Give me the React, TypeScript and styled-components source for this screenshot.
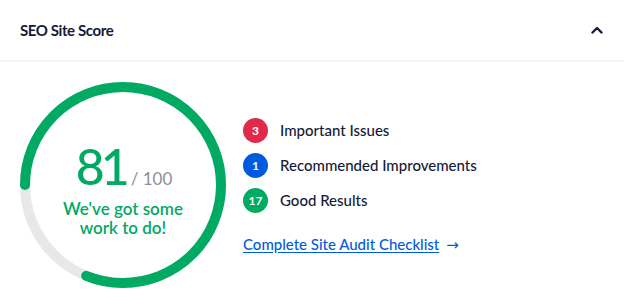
import React from 'react';
import styled, { createGlobalStyle } from 'styled-components';

const GlobalStyle = createGlobalStyle`
  html, body {
    margin: 0;
    padding: 0;
    background: #ffffff;
  }
  body {
    font-family: Lato, "Noto Sans", sans-serif;
    color: #141b38;
  }
`;

const RADIUS = 98;
const STROKE = 10;
const SIZE = (RADIUS + STROKE / 2) * 2;
const CIRC = 2 * Math.PI * RADIUS;

const stats = [
  { count: 3, label: 'Important Issues', color: '#df2a4a' },
  { count: 1, label: 'Recommended Improvements', color: '#005ae0' },
  { count: 17, label: 'Good Results', color: '#00aa63' },
];

function ScoreRing({ score }: { score: number }) {
  const filled = (score / 100) * CIRC;
  return (
    <RingWrap>
      <RingSvg width={SIZE} height={SIZE} viewBox={`0 0 ${SIZE} ${SIZE}`}>
        <circle cx={SIZE / 2} cy={SIZE / 2} r={RADIUS} fill="none" stroke="#e8e8eb" strokeWidth={STROKE} />
        <circle
          cx={SIZE / 2}
          cy={SIZE / 2}
          r={RADIUS}
          fill="none"
          stroke="#00aa63"
          strokeWidth={STROKE}
          strokeLinecap="round"
          strokeDasharray={`${filled} ${CIRC}`}
          transform={`rotate(180 ${SIZE / 2} ${SIZE / 2})`}
        />
      </RingSvg>
      <RingText>
        <ScoreLine>
          <Score>{score}</Score>
          <OutOf>/ 100</OutOf>
        </ScoreLine>
        <Message>We've got some<br />work to do!</Message>
      </RingText>
    </RingWrap>
  );
}

export default function App() {
  return (
    <>
      <GlobalStyle />
      <Card>
        <Header>
          <Title>SEO Site Score</Title>
          <Chevron width="12" height="8" viewBox="0 0 12 8">
            <path d="M1.5 6.5 L6 2 L10.5 6.5" fill="none" stroke="#141b38" strokeWidth="2.4" strokeLinecap="round" strokeLinejoin="round" />
          </Chevron>
        </Header>
        <Body>
          <ScoreRing score={81} />
          <Summary>
            <StatList>
              {stats.map((s) => (
                <StatRow key={s.label}>
                  <Badge color={s.color}>{s.count}</Badge>
                  <StatLabel>{s.label}</StatLabel>
                </StatRow>
              ))}
            </StatList>
            <LinkRow>
              <AuditLink href="#">Complete Site Audit Checklist</AuditLink>
              <Arrow>→</Arrow>
            </LinkRow>
          </Summary>
        </Body>
      </Card>
    </>
  );
}

const Card = styled.div`
  width: 624px;
  height: 297px;
  overflow: hidden;
  background: #ffffff;
`;

const Header = styled.div`
  display: flex;
  align-items: center;
  justify-content: space-between;
  height: 60px;
  padding: 0 20px 0 20px;
  border-bottom: 2px solid #f3f4f5;
`;

const Title = styled.h2`
  margin: 0;
  font-size: 15px;
  font-weight: 700;
  letter-spacing: -0.4px;
  color: #141b38;
`;

const Chevron = styled.svg`
  display: block;
  margin-right: 1px;
`;

const Body = styled.div`
  display: flex;
  align-items: flex-start;
  padding: 20px 0 0 20px;
  gap: 17px;
`;

const RingWrap = styled.div`
  display: grid;
  flex-shrink: 0;
  width: ${SIZE}px;
  height: ${SIZE}px;
`;

const RingSvg = styled.svg`
  grid-area: 1 / 1;
  display: block;
`;

const RingText = styled.div`
  grid-area: 1 / 1;
  display: flex;
  flex-direction: column;
  align-items: center;
  justify-content: center;
  padding-top: 8px;
`;

const ScoreLine = styled.div`
  display: flex;
  align-items: baseline;
  gap: 5px;
  margin-left: 2px;
`;

const Score = styled.span`
  font-size: 50px;
  font-weight: 500;
  line-height: 1;
  letter-spacing: -4px;
  color: #00aa63;
`;

const OutOf = styled.span`
  font-size: 17px;
  color: #8c8f9a;
`;

const Message = styled.div`
  margin-top: 8px;
  font-size: 17px;
  font-weight: 600;
  line-height: 19px;
  text-align: center;
  color: #00aa63;
`;

const Summary = styled.div`
  display: flex;
  flex-direction: column;
  padding-top: 36px;
`;

const StatList = styled.div`
  display: flex;
  flex-direction: column;
  gap: 11px;
`;

const StatRow = styled.div`
  display: flex;
  align-items: center;
  gap: 12px;
  height: 24px;
`;

const Badge = styled.span<{ color: string }>`
  display: flex;
  align-items: center;
  justify-content: center;
  width: 25px;
  height: 25px;
  border-radius: 50%;
  background: ${(p) => p.color};
  color: #ffffff;
  font-size: 12px;
  font-weight: 700;
`;

const StatLabel = styled.span`
  font-size: 15px;
  font-weight: 500;
  color: #141b38;
`;

const LinkRow = styled.div`
  display: flex;
  align-items: baseline;
  gap: 7px;
  margin-top: 23px;
  font-size: 15px;
  font-weight: 500;
  color: #005ae0;
`;

const AuditLink = styled.a`
  color: #005ae0;
  text-decoration: underline;
  text-underline-offset: 2px;
`;

const Arrow = styled.span`
  font-family: "DejaVu Sans", sans-serif;
  font-size: 15px;
`;
